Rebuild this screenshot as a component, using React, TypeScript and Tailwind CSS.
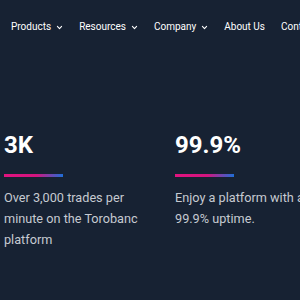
import React from 'react';

const navItems = [
  { label: 'Products', menu: true },
  { label: 'Resources', menu: true },
  { label: 'Company', menu: true },
  { label: 'About Us', menu: false },
  { label: 'Contact', menu: false },
];

const stats = [
  { value: '3K', text: 'Over 3,000 trades per minute on the Torobanc platform' },
  { value: '99.9%', text: 'Enjoy a platform with a 99.9% uptime.' },
];

const Chevron = () => (
  <svg width="7" height="7" viewBox="0 0 10 10" fill="none" stroke="currentColor" strokeWidth="1.6" strokeLinecap="round" strokeLinejoin="round">
    <path d="M2 3.5 L5 6.5 L8 3.5" />
  </svg>
);

export default function App() {
  return (
    <div className="w-[300px] h-[300px] overflow-hidden bg-[#172233] font-['Roboto',sans-serif]">
      <nav className="flex items-center gap-[16px] pl-[11px] pt-[20px] whitespace-nowrap">
        {navItems.map((item) => (
          <div key={item.label} className="flex items-center gap-[5px] text-[10px] leading-[14px] text-white">
            <span>{item.label}</span>
            {item.menu && <Chevron />}
          </div>
        ))}
      </nav>
      <div className="grid grid-cols-[171px_171px] pl-[4px] pt-[96px]">
        {stats.map((s) => (
          <div key={s.value} className="flex flex-col">
            <div className="text-[24px] font-bold text-white leading-[30px]">{s.value}</div>
            <div className="mt-[14px] h-[3px] w-[59px] bg-[linear-gradient(90deg,#e2137f_0%,#d3157f_55%,#1e6fd8_100%)]" />
            <p className="mt-[10px] w-[155px] text-[12.7px] leading-[21px] text-[#c6cad1]">{s.text}</p>
          </div>
        ))}
      </div>
    </div>
  );
}
